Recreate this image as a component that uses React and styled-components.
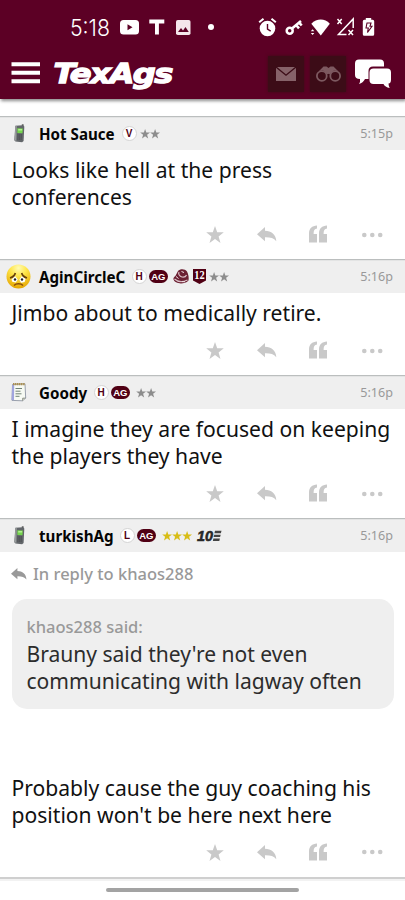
import React from "react";
import styled, { createGlobalStyle } from "styled-components";

const MAROON = "#5c0025";
const BADGE = "#500014";

const GlobalStyle = createGlobalStyle`
  * { box-sizing: border-box; }
  html, body { margin: 0; background: #fff; }
  body { font-family: "Noto Sans", "Open Sans", sans-serif; color: #111; overflow: hidden; }
  svg { display: block; flex: none; overflow: visible; }
`;

const Screen = styled.div`
  width: 405px;
  height: 900px;
  display: flex;
  flex-direction: column;
  overflow: hidden;
  background: #fff;
`;

const TopBar = styled.header`
  height: 99px;
  flex: none;
  background: ${MAROON};
  box-shadow: 1px 2px 3px rgba(0, 0, 0, 0.45);
  color: #fff;
`;

const StatusBar = styled.div`
  display: flex;
  align-items: center;
  height: 54px;
  padding: 0 31px 0 70px;
`;

const StatusGroup = styled.div`
  display: flex;
  align-items: center;
  gap: ${(p) => p.$gap}px;
  margin-left: ${(p) => p.$push || "0"};
`;

const NavBar = styled.nav`
  display: flex;
  align-items: center;
  height: 39px;
  padding: 0 14.5px 0 11px;
`;

const Logo = styled.h1`
  margin: 0 auto 0 14px;
  line-height: 0;
`;

const NavButton = styled.div`
  display: flex;
  align-items: center;
  justify-content: center;
  width: 36px;
  height: 36px;
  margin-right: ${(p) => p.$gap}px;
  background: #3c0c17;
  box-shadow: 0 0 3px #3c0c17;
`;

const Thread = styled.main`
  flex: none;
  padding-top: 17px;
`;

const PostBox = styled.article`
  height: ${(p) => p.$height}px;
  border-top: 1px solid #bbbebe;
  display: flex;
  flex-direction: column;
`;

const PostHeader = styled.div`
  display: flex;
  align-items: center;
  height: 33px;
  flex: none;
  background: #efefef;
  padding: 0 12px 1px 0;
  border-top: 1px solid #e3e4e4;
`;

const Avatar = styled.div`
  width: 39px;
  padding-left: ${(p) => p.$inset}px;
  margin-top: -1px;
`;

const UserName = styled.span`
  width: ${(p) => p.$width}px;
  font-size: 15.15px;
  font-weight: 700;
  line-height: 20px;
  white-space: nowrap;
  color: #050505;
`;

const Badges = styled.div`
  display: flex;
  align-items: center;
`;

const Time = styled.time`
  margin-left: auto;
  font-size: 12.6px;
  line-height: 18px;
  color: #999;
`;

const Message = styled.p`
  margin: ${(p) => p.$top}px 0 0 11.5px;
  font-size: 21.1px;
  line-height: 27px;
  white-space: pre;
`;

const Actions = styled.div`
  display: grid;
  grid-template-columns: 18px 20px 18px 22px;
  column-gap: 33px;
  align-items: center;
  justify-content: end;
  height: 50px;
  padding-right: 22px;
  margin-top: auto;
  color: #c9c9c9;
`;

const ReplyTo = styled.div`
  display: flex;
  align-items: center;
  gap: 6px;
  height: 24px;
  margin: 10px 12px 0 11px;
  color: #999;
  font-size: 16.5px;
  font-weight: 500;
`;

const Quote = styled.blockquote`
  height: 111px;
  margin: 13px 11.5px 0 11.5px;
  padding: 16px 0 0 15px;
  border-radius: 15px;
  background: #efefef;
`;

const QuoteAuthor = styled.div`
  font-size: 16.5px;
  line-height: 24px;
  font-weight: 500;
  color: #999;
`;

const QuoteText = styled.p`
  margin: 1px 0 0;
  font-size: 21.05px;
  line-height: 27px;
  color: #2c2c2c;
  white-space: pre;
`;

const BottomBar = styled.footer`
  flex: 1;
  display: flex;
  justify-content: center;
  padding-top: 9px;
  border-top: 2px solid #cfcfcf;
  box-shadow: inset 0 2px 0 #f2f2f2;
`;

const Handle = styled.div`
  width: 193px;
  height: 4px;
  border-radius: 2px;
  background: #a3a3a3;
`;

const REPLY_PATH = "M0 7.2 8 0v3.8c6.2.3 11 3.4 11.3 10.5-2.6-3.4-6.2-4.2-11.3-4.1v4z";
const STAR_PATH = "M9 0l2.2 6.2 6.6.1-5.2 4.1 1.9 6.5L9 13.1l-5.5 3.8 1.9-6.5L.2 6.3l6.6-.1z";

const ReplyIcon = ({ width = 20 }) => (
  <svg width={width} height={width * 0.75} viewBox="0 0 20 15" fill="currentColor">
    <path d={REPLY_PATH} />
  </svg>
);

const PostActions = () => (
  <Actions>
    <svg width="18" height="17" viewBox="0 0 18 17" fill="currentColor">
      <path d={STAR_PATH} />
    </svg>
    <ReplyIcon />
    <svg width="18" height="17" viewBox="1 .5 18 17" fill="currentColor">
      <path d="M8 0v3C5.500 3.300 4.500 5 4.600 8.500H8V17H0V8C0 3 3 .3 8 0zM18 0v3c-2.500.3-3.500 2-3.400 5.500H18V17h-8V8c0-5 3-7.700 8-8z" />
    </svg>
    <svg width="22" height="6" viewBox="-.5 0 22 6" fill="currentColor">
      <circle cx="2.800" cy="3" r="2.300" />
      <circle cx="10.800" cy="3" r="2.300" />
      <circle cx="18.700" cy="3" r="2.300" />
    </svg>
  </Actions>
);

const PhoneIcon = () => (
  <svg width="14" height="19" viewBox="-.8 0 14 19">
    <path d="M9 4V.3h1.800V4" fill="#555" />
    <path d="M2.500 1.800 10 1.300l1.500 1.200L10.800 17l-1.500 1.200-6.600-.8-1.200-1.200z" fill="#62666a" />
    <path d="M2.500 2 4 1.700 3.500 17l-1.700-.8z" fill="#999d9d" />
    <path d="M4.500 4.300l5.500.1-.3 4.800-5.200-.1z" fill="#75d54e" />
    <path d="M5.500 5h3.800v1.600H5.400z" fill="#b3ef91" />
    <path d="M4.600 11h4.700M4.600 13h4.600M4.500 15h4.500" stroke="#404244" strokeWidth=".9" strokeDasharray="1.200 .5" />
  </svg>
);

const SadIcon = () => (
  <svg width="25" height="25" viewBox="0 0 25 25">
    <defs>
      <radialGradient id="sadFace" cx=".5" cy=".15" r=".85">
        <stop offset="0" stopColor="#fffbb4" />
        <stop offset=".4" stopColor="#ffe64a" />
        <stop offset="1" stopColor="#e5a500" />
      </radialGradient>
    </defs>
    <circle cx="12.500" cy="12.500" r="12" fill="url(#sadFace)" />
    <path d="M5.500 15.500l3.500-3.500 2.800 3.500-2 3-3.500-.8zM13.300 15.800l2.700-3.800 3.600 3-1 2.900-3.500.8z" fill="#fff" />
    <path d="M4 14C7 13 8.800 11.500 9.300 9M15.700 9c.5 2.500 2.300 4 5.300 5" fill="none" stroke="#69420b" strokeWidth="1.700" />
    <circle cx="9" cy="15.500" r="1.200" fill="#222" />
    <circle cx="16" cy="15.500" r="1.200" fill="#222" />
    <path d="M8 21.500c2-2.300 7-2.300 9 0" fill="none" stroke="#8a4d0a" strokeWidth="1.400" />
  </svg>
);

const NoteIcon = () => (
  <svg width="16" height="20" viewBox="0 0 16 20">
    <path d="M1.500 2.500l12.500-.7.7 14.300-3.200 2.700-10.500-.4z" fill="#f7faf3" stroke="#838a9a" strokeWidth=".8" />
    <path d="M1.200 2.800h2L3 18.300l-2.400-.2z" fill="#a0a5de" />
    <path d="M2 2.200h12" stroke="#ab9054" strokeWidth="2.200" strokeDasharray="1.400 .5" />
    <path d="M4.500 6.500h6.500M4.500 9.200h5M4.500 11.800h6M4.500 14.300h4" stroke="#6f8275" strokeWidth="1" />
    <path d="M11.500 18.800l.2-2.700h3" fill="#c7ccbc" stroke="#7b8079" strokeWidth=".7" />
  </svg>
);

const LetterBadge = styled.span`
  display: flex;
  align-items: center;
  justify-content: center;
  width: 15px;
  height: 15px;
  border-radius: 50%;
  border: 1px solid #d4d4d4;
  background: #fff;
  color: ${BADGE};
  font: 700 10px/13px "Liberation Sans", Arial, sans-serif;
`;

const AgBadge = styled.span`
  display: flex;
  align-items: center;
  justify-content: center;
  width: 19.5px;
  height: 13px;
  margin-left: 2px;
  border-radius: 7px;
  background: ${BADGE};
  color: #fff;
  font: 700 9.5px/13px "Liberation Sans", Arial, sans-serif;
`;

const StarRow = styled.span`
  display: flex;
  margin-left: ${(p) => p.$left}px;
  color: ${(p) => p.$color};
`;

const Stars = ({ count, color = "#8d8d8d", left }) => (
  <StarRow $color={color} $left={left}>
    {Array.from({ length: count }, (_, i) => (
      <svg key={i} width="10.200" height="9.500" viewBox="0 0 18 17" fill="currentColor">
        <path d={STAR_PATH} />
      </svg>
    ))}
  </StarRow>
);

const BadgeArt = styled.span`
  margin-left: ${(p) => p.$left}px;
`;

const RingBadge = () => (
  <BadgeArt $left={4.5}>
    <svg width="16" height="15" viewBox="0 0 16 15">
      <path d="M5 2C7-.2 12-.3 14 2.500c1.500 3 2 6 1.500 9-2 2.300-5 2.800-7.500 2.900C4.500 14.300 1 13 .4 10c0-1.500 1-2.500 2-3z" fill="#6b1f32" />
      <path d="M6 3c-1 2 .5 4.500 3 5s4-.8 4.500-2M1.500 10c3 2.700 8 3.300 13 1" fill="none" stroke="#d9bdc4" strokeWidth="1.200" />
      <path d="M8.500 2.500l2.500 1M3 7.500l2.500 2M9 12.700h3" stroke="#f2e5e8" strokeWidth="1" />
    </svg>
  </BadgeArt>
);

const ShieldBadge = () => (
  <BadgeArt $left={4}>
    <svg width="13" height="15" viewBox="0 0 13 15">
      <path d="M0 0h13v11.500L6.500 15 0 11.500z" fill={BADGE} />
      <text x="1.300" y="10.300" textLength="10.400" lengthAdjust="spacingAndGlyphs" fill="#fff" fontFamily="Liberation Serif, serif" fontWeight="700" fontSize="12.500">12</text>
    </svg>
  </BadgeArt>
);

const TenBadge = () => (
  <BadgeArt $left={4}>
    <svg width="26" height="12" viewBox="0 0 26 12">
      <text x="0" y="11.300" textLength="16" lengthAdjust="spacingAndGlyphs" fill="#272727" stroke="#272727" strokeWidth=".6" fontFamily="Liberation Sans, Arial, sans-serif" fontWeight="700" fontStyle="italic" fontSize="15.500">10</text>
      <path d="M18 .8h6.500l-.6 2.400h-6.500zM17.200 4.700h6.500l-.6 2.400h-6.500zM16.400 8.600h6.500l-.6 2.400h-6.500z" fill="#444" />
    </svg>
  </BadgeArt>
);

const StatusIcons = () => (
  <>
    <svg width="41" height="22" viewBox="0 0 41 22">
      <text x="0" y="19.500" textLength="40" lengthAdjust="spacingAndGlyphs" fill="#fff" fontFamily="Inter, Roboto, sans-serif" fontWeight="300" fontSize="23">5:18</text>
    </svg>
    <StatusGroup $gap={10} $push="9px">
      <svg width="19" height="15" viewBox="0 0 19 15">
        <rect width="19" height="14.500" rx="3.500" fill="#fff" />
        <path d="M7.500 4.200v6l5-3z" fill={MAROON} />
      </svg>
      <svg width="16" height="16" viewBox="0 0 16 16">
        <path d="M.3.500h15v4h-5.400v11H6V4.500H.3z" fill="#fff" />
      </svg>
      <svg width="15" height="15" viewBox="0 0 15 15">
        <rect x="1" width="14.500" height="15" rx="1.800" fill="#f4e6eb" />
        <path d="M3 12l3-4 2 2.400L10.500 7l3.300 5z" fill={MAROON} />
      </svg>
    </StatusGroup>
    <StatusGroup $gap={9} $push="18px">
      <svg width="6" height="6" viewBox="0 0 6 6"><circle cx="3" cy="3" r="3" fill="#fff" /></svg>
    </StatusGroup>
    <StatusGroup $gap={8} $push="auto">
      <svg width="18" height="19" viewBox="-.5 0 18 19">
        <circle cx="9" cy="10.500" r="7.800" fill="#fff" />
        <path d="M.7 4.300 5 .7M17.300 4.300 13 .7" stroke="#fff" strokeWidth="2" />
        <path d="M9 6v5l3.200 2.100" fill="none" stroke={MAROON} strokeWidth="1.400" />
      </svg>
      <svg width="17" height="17" viewBox="-1.500 0 17 17" fill="none" stroke="#fff">
        <circle cx="4.200" cy="11.800" r="3" strokeWidth="2.500" />
        <path d="M6.500 9.500 15.500 2M11 6.500l2.500 2.800M13.800 3.800l2.400 2.700" strokeWidth="2.600" />
      </svg>
      <svg width="20" height="17" viewBox="-.8 0 20 17" fill="#fff">
        <path d="M1.500 4.700C7-.8 15-.8 20 4.700L11 16.500z" />
        <path d="M1 12.300l1.800-2 1.700 2zM1 14l1.800 2 1.700-2z" />
      </svg>
      <svg width="17" height="18" viewBox="0 0 17 18" fill="none" stroke="#fff" strokeWidth="1.500">
        <path d="M.5 1l4.200 5M4.700 1L.5 6M11.500 12l4.500 5M16 12l-4.500 5M9.500 16.500H1.500L16.200 1v9" />
      </svg>
      <svg width="12" height="18" viewBox="-.5 0 12 18">
        <path d="M3.300 0h5.400v1.800h1.500q1.500 0 1.500 1.500v13q0 1.500-1.500 1.500H1.800Q.3 17.800.3 16.300v-13q0-1.500 1.500-1.500h1.500z" fill="#fff" />
        <path d="M4.500 5h4l-1 3.300h2L5 14.500l.8-4.500H3.500z" fill="none" stroke={MAROON} strokeWidth="1.100" />
      </svg>
    </StatusGroup>
  </>
);

const Navigation = () => (
  <NavBar>
    <svg width="29" height="24" viewBox="0 0 29 24" fill="#fff">
      <path d="M.5.300h28.500v4H.5zM.5 8.800h28.500v4H.5zM.5 17.300h28.500v4H.5z" />
    </svg>
    <Logo>
      <svg width="119" height="30" viewBox="0 0 119 30">
        <text x="-.5" y="23.500" textLength="118.500" lengthAdjust="spacingAndGlyphs" fill="#fff" stroke="#fff" strokeWidth="1.300" fontFamily="DejaVu Sans, sans-serif" fontWeight="700" fontStyle="italic" fontSize="26.500" letterSpacing="-1.200">TexAgs</text>
      </svg>
    </Logo>
    <NavButton $gap={6}>
      <svg width="20" height="14" viewBox="0 0 20 14">
        <path d="M0 0h20v14H0z" fill="#866269" />
        <path d="M0 0l10 8.200L20 0" fill="none" stroke="#3c0c17" strokeWidth="1.400" />
      </svg>
    </NavButton>
    <NavButton $gap={8.5}>
      <svg width="25" height="16" viewBox="0 0 25 16" fill="none" stroke="#7d5960" strokeWidth="1.800">
        <circle cx="5.800" cy="10" r="4.900" />
        <circle cx="19.200" cy="10" r="4.900" />
        <path d="M10.500 7.500q2-1.300 4 0" strokeWidth="2" />
        <path d="M3 5 7.500.5h3L12.500 2l2-1.500h3L22 5l-4-.5-4 3h-3l-4-3z" fill="#7d5960" stroke="none" />
      </svg>
    </NavButton>
    <svg width="36" height="28" viewBox="0 .5 36 28" fill="#fff">
      <path d="M4 0h21q4 0 4 4v3H18q-4.500 0-4.500 4.500v8H10q-2 4-6 5 1.500-2 1-5-5 0-5-4V4q0-4 4-4z" />
      <path d="M18.500 9H32q4 0 4 4v7q0 4-2.500 4 0 2 1.200 4.500Q30 27.500 28.500 24.500h-10q-4 0-4-4V13q0-4 4-4z" />
    </svg>
  </NavBar>
);

const PostHead = ({ avatar, inset, name, nameWidth, time, children }) => (
  <PostHeader>
    <Avatar $inset={inset}>{avatar}</Avatar>
    <UserName $width={nameWidth}>{name}</UserName>
    <Badges>{children}</Badges>
    <Time>{time}</Time>
  </PostHeader>
);

export default function App() {
  return (
    <Screen>
      <GlobalStyle />
      <TopBar>
        <StatusBar><StatusIcons /></StatusBar>
        <Navigation />
      </TopBar>
      <Thread>
        <PostBox $height={143}>
          <PostHead avatar={<PhoneIcon />} inset={12} name="Hot Sauce" nameWidth={82.500} time="5:15p">
            <LetterBadge>V</LetterBadge>
            <Stars count={2} left={3.5} />
          </PostHead>
          <Message $top={6}>{"Looks like hell at the press\nconferences"}</Message>
          <PostActions />
        </PostBox>
        <PostBox $height={116}>
          <PostHead avatar={<SadIcon />} inset={6} name="AginCircleC" nameWidth={92.500} time="5:16p">
            <LetterBadge>H</LetterBadge>
            <AgBadge>AG</AgBadge>
            <RingBadge />
            <ShieldBadge />
            <Stars count={2} left={3.5} />
          </PostHead>
          <Message $top={6}>Jimbo about to medically retire.</Message>
          <PostActions />
        </PostBox>
        <PostBox $height={143}>
          <PostHead avatar={<NoteIcon />} inset={11} name="Goody" nameWidth={54.5} time="5:16p">
            <LetterBadge>H</LetterBadge>
            <AgBadge>AG</AgBadge>
            <Stars count={2} left={6} />
          </PostHead>
          <Message $top={6}>{"I imagine they are focused on keeping\nthe players they have"}</Message>
          <PostActions />
        </PostBox>
        <PostBox $height={359}>
          <PostHead avatar={<PhoneIcon />} inset={12} name="turkishAg" nameWidth={80.5} time="5:16p">
            <LetterBadge>L</LetterBadge>
            <AgBadge>AG</AgBadge>
            <Stars count={3} color="#d8bd16" left={6} />
            <TenBadge />
          </PostHead>
          <ReplyTo><ReplyIcon width={16} />In reply to khaos288</ReplyTo>
          <Quote>
            <QuoteAuthor>khaos288 said:</QuoteAuthor>
            <QuoteText>{"Brauny said they're not even\ncommunicating with lagway often"}</QuoteText>
          </Quote>
          <Message $top={65}>{"Probably cause the guy coaching his\nposition won't be here next here"}</Message>
          <PostActions />
        </PostBox>
      </Thread>
      <BottomBar><Handle /></BottomBar>
    </Screen>
  );
}
